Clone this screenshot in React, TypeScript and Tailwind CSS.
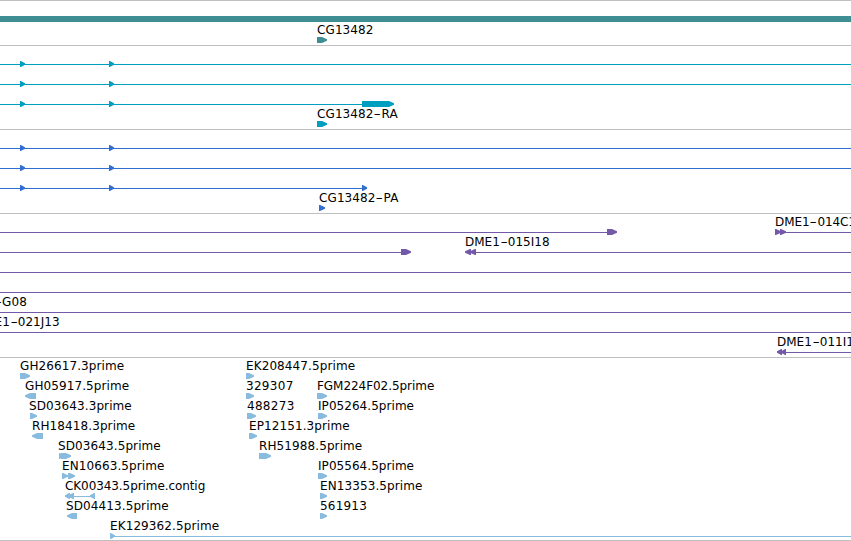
type Shape = "right" | "left" | "line" | "bar";

// [shape, start, end] in canvas pixels
type Glyph = [Shape, number, number];

// [text, start, tracking class]
type Label = [string, number, string?];

interface Row {
  labels?: Label[];
  glyphs: Glyph[];
}

interface TrackData {
  name: string;
  color: string;
  className: string;
  rows: Row[];
}

const WIDTH = 851;

const exons: Glyph[] = [
  ["right", 20, 25],
  ["right", 109, 114],
];

const tracks: TrackData[] = [
  {
    name: "gene",
    color: "fill-[#3e8e94]",
    className: "h-[45px]",
    rows: [
      { glyphs: [["bar", 0, WIDTH]] },
      { labels: [["CG13482", 317]], glyphs: [["right", 317, 327]] },
    ],
  },
  {
    name: "mrna",
    color: "fill-[#009ebf]",
    className: "h-[84px]",
    rows: [
      { glyphs: [["line", 0, WIDTH], ...exons] },
      { glyphs: [["line", 0, WIDTH], ...exons] },
      { glyphs: [["line", 0, 362], ...exons, ["right", 362, 394]] },
      { labels: [["CG13482-RA", 317]], glyphs: [["right", 317, 327]] },
    ],
  },
  {
    name: "cds",
    color: "fill-[#326ed0]",
    className: "h-[84px]",
    rows: [
      { glyphs: [["line", 0, WIDTH], ...exons] },
      { glyphs: [["line", 0, WIDTH], ...exons] },
      { glyphs: [["line", 0, 362], ...exons, ["right", 362, 367]] },
      { labels: [["CG13482-PA", 319]], glyphs: [["right", 319, 325]] },
    ],
  },
  {
    name: "bac",
    color: "fill-[#7459a9]",
    className: "h-[144px]",
    rows: [
      {
        labels: [["DME1-014C17", 775, "tracking-[-0.1px]"]],
        glyphs: [
          ["line", 0, 607],
          ["right", 607, 617],
          ["right", 775, 781],
          ["right", 780, 786],
          ["line", 776, WIDTH],
        ],
      },
      {
        labels: [["DME1-015I18", 465, "tracking-normal"]],
        glyphs: [
          ["line", 0, 401],
          ["right", 401, 411],
          ["left", 465, 471],
          ["left", 470, 476],
          ["line", 470, WIDTH],
        ],
      },
      { glyphs: [["line", 0, WIDTH]] },
      { glyphs: [["line", 0, WIDTH]] },
      { labels: [["-G08", -6]], glyphs: [["line", 0, WIDTH]] },
      { labels: [["DME1-021J13", -25, "tracking-normal"]], glyphs: [["line", 0, WIDTH]] },
      {
        labels: [["DME1-011I12", 777, "tracking-normal"]],
        glyphs: [
          ["left", 777, 782],
          ["left", 781, 786],
          ["line", 782, WIDTH],
        ],
      },
    ],
  },
  {
    name: "est",
    color: "fill-[#88bbdd]",
    className: "h-[183px]",
    rows: [
      {
        labels: [["GH26617.3prime", 20], ["EK208447.5prime", 246]],
        glyphs: [["right", 20, 30], ["right", 246, 254]],
      },
      {
        labels: [
          ["GH05917.5prime", 25],
          ["329307", 246, "tracking-[0.3px]"],
          ["FGM224F02.5prime", 317, "tracking-[-0.05px]"],
        ],
        glyphs: [["left", 25, 36], ["right", 246, 254], ["right", 317, 327]],
      },
      {
        labels: [
          ["SD03643.3prime", 29],
          ["488273", 247, "tracking-[0.3px]"],
          ["IP05264.5prime", 318, "tracking-[0.05px]"],
        ],
        glyphs: [["right", 30, 37], ["right", 247, 256], ["right", 318, 327]],
      },
      {
        labels: [["RH18418.3prime", 32], ["EP12151.3prime", 249]],
        glyphs: [["left", 32, 43], ["right", 249, 257]],
      },
      {
        labels: [["SD03643.5prime", 58], ["RH51988.5prime", 259]],
        glyphs: [["right", 59, 64], ["right", 61, 71], ["right", 259, 271]],
      },
      {
        labels: [["EN10663.5prime", 62], ["IP05564.5prime", 318, "tracking-[0.05px]"]],
        glyphs: [["right", 62, 68], ["right", 68, 75], ["line", 63, 72], ["right", 318, 327]],
      },
      {
        labels: [["CK00343.5prime.contig", 65, "tracking-[-0.08px]"], ["EN13353.5prime", 320]],
        glyphs: [
          ["left", 65, 70],
          ["left", 68, 74],
          ["line", 70, 91],
          ["left", 90, 95],
          ["right", 320, 327],
        ],
      },
      {
        labels: [["SD04413.5prime", 66], ["561913", 320, "tracking-[0.2px]"]],
        glyphs: [["left", 67, 77], ["right", 320, 327]],
      },
      {
        labels: [["EK129362.5prime", 110]],
        glyphs: [["right", 110, 115], ["line", 112, WIDTH]],
      },
    ],
  },
];

const FeatureGlyph = ({ glyph }: { glyph: Glyph }) => {
  const [shape, start, end] = glyph;

  if (shape === "line") {
    return <rect x={start} y={3} width={end - start} height={1} shapeRendering="crispEdges" />;
  }
  if (shape === "bar") {
    return <rect x={start} y={0} width={end - start} height={6} shapeRendering="crispEdges" />;
  }

  // wide features keep a square body, narrow ones are only the blunt arrow head
  const head = Math.min(5, end - start - 0.8);
  const points =
    shape === "right"
      ? `${start},0 ${end - head},0 ${end},2.2 ${end},3.8 ${end - head},6 ${start},6`
      : `${end},0 ${start + head},0 ${start},2.2 ${start},3.8 ${start + head},6 ${end},6`;

  return <polygon points={points} />;
};

// the dash is drawn as wide as a digit
const LabelText = ({ text }: { text: string }) => {
  const [before, after] = text.split("-");
  if (after === undefined) return <>{text}</>;

  return (
    <>
      {before}
      <span className="inline-block w-2 text-center">
        <span className="inline-block scale-x-170">-</span>
      </span>
      {after}
    </>
  );
};

const FeatureRow = ({ row, color, tall }: { row: Row; color: string; tall: boolean }) => (
  <div className={tall ? "h-[21px]" : "h-5"}>
    <div className="relative h-[15px]">
      {row.labels?.map(([text, start, tracking = "tracking-[0.1px]"]) => (
        <span
          key={text}
          className={`absolute top-px text-[12px] leading-[15px] whitespace-nowrap text-black ${tracking}`}
          style={{ left: start }}
        >
          <LabelText text={text} />
        </span>
      ))}
    </div>
    <svg className={`block h-1.5 w-full ${color}`}>
      {row.glyphs.map((glyph, idx) => (
        <FeatureGlyph key={idx} glyph={glyph} />
      ))}
    </svg>
  </div>
);

const Track = ({ track }: { track: TrackData }) => (
  <section className={`border-t border-[#c0c0c0] ${track.className}`}>
    {track.rows.map((row, idx) => (
      <FeatureRow
        key={idx}
        row={row}
        color={track.color}
        tall={track.name === "gene" && idx === 0}
      />
    ))}
  </section>
);

export default function App() {
  return (
    <main className="h-[541px] w-[851px] overflow-hidden border-b border-[#c0c0c0] bg-white font-['DejaVu_Sans',sans-serif]">
      {tracks.map((track) => (
        <Track key={track.name} track={track} />
      ))}
    </main>
  );
}
